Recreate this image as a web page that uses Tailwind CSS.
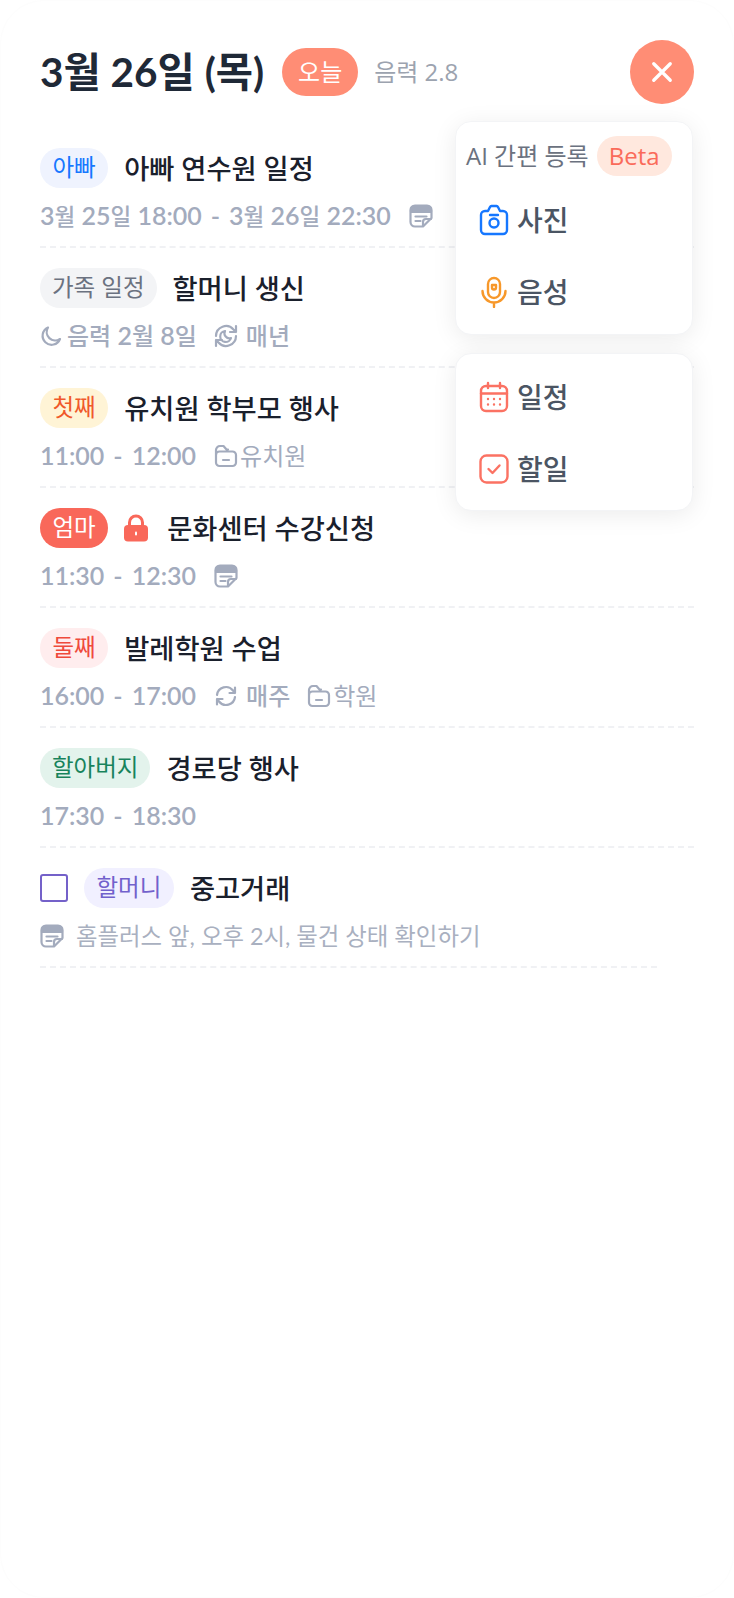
<!DOCTYPE html>
<html lang="ko">
<head>
  <meta charset="UTF-8" />
  <meta name="viewport" content="width=device-width, initial-scale=1" />
  <title>일정</title>
  <script src="https://cdn.jsdelivr.net/npm/@tailwindcss/browser@4"></script>
</head>
<body class="bg-white">
  <div class="relative w-[734px] h-[1598px] overflow-hidden rounded-[44px] border border-[#fdfdfd] font-['Lato','Noto_Sans_CJK_KR',sans-serif]">
    <!-- header -->
    <header class="flex items-center h-[127px] pl-[39px] pr-[39px] pt-[31px] pb-[16px]">
      <h1 class="text-[40.500px] font-bold text-[#1f2937] leading-none">3월 26일 (목)</h1>
      <span class="ml-[18px] flex items-center justify-center w-[76px] h-[48px] rounded-full bg-[#ff8d75] text-white text-[24px]">오늘</span>
      <span class="ml-[16px] text-[24px] text-[#9ca3af] font-['Open_Sans','Noto_Sans_CJK_KR',sans-serif]">음력 2.8</span>
      <button class="ml-auto w-[64px] h-[64px] rounded-full bg-[#ff8d75] flex items-center justify-center">
        <svg width="22" height="22" viewBox="0 0 24 24" fill="none" stroke="white" stroke-width="3.600" stroke-linecap="round"><path d="M3 3l18 18M21 3L3 21"/></svg>
      </button>
    </header>

    <!-- list -->
    <ul class="px-[39px]">
      <li class="h-[120px] pt-[20px] border-b-2 border-dashed border-[#f0f1f4]">
        <div class="flex items-center h-[40px]">
          <span class="flex items-center h-[40px] px-[12.500px] rounded-full bg-[#eff3fe] text-[#1677ff] text-[23.500px]">아빠</span>
          <span class="ml-[16px] pt-[2px] text-[27.300px] font-medium text-[#1a202c]">아빠 연수원 일정</span>
        </div>
        <div class="flex items-center h-[32px] mt-[12px] text-[#a3abbd] text-[25px] font-semibold">
          <span>3<span class="text-[22.500px] font-medium">월</span> 25<span class="text-[22.500px] font-medium">일</span> 18:00</span><span class="ml-[9px]">-</span><span class="ml-[9px]">3<span class="text-[22.500px] font-medium">월</span> 26<span class="text-[22.500px] font-medium">일</span> 22:30</span>
          <svg class="ml-[18px]" width="24" height="24" viewBox="0 0 24 24" fill="none" stroke="#a3abbd" stroke-width="2.200" stroke-linecap="round" stroke-linejoin="round"><path d="M22.500 14V6a4.500 4.500 0 0 0-4.500-4.500H6A4.500 4.500 0 0 0 1.500 6v12A4.500 4.500 0 0 0 6 22.500h8z"/><path d="M2 6.500A4.500 4.500 0 0 1 6 2h12a4.500 4.500 0 0 1 4 4.500V8H2z" fill="#a3abbd"/><path d="M6.500 12.500h11M6.500 17h5M14 22v-4a3 3 0 0 1 3-3h5"/></svg>
        </div>
      </li>
      <li class="h-[120px] pt-[20px] border-b-2 border-dashed border-[#f0f1f4]">
        <div class="flex items-center h-[40px]">
          <span class="flex items-center h-[40px] px-[12px] rounded-full bg-[#f3f4f6] text-[#6b7280] text-[23.500px]">가족 일정</span>
          <span class="ml-[16px] pt-[2px] text-[27.300px] font-medium text-[#1a202c]">할머니 생신</span>
        </div>
        <div class="flex items-center h-[32px] mt-[12px] text-[#a3abbd] text-[25px] font-semibold">
          <svg class="-ml-px" width="24" height="24" viewBox="0 0 24 24" fill="none" stroke="#a3abbd" stroke-width="2.200" stroke-linecap="round" stroke-linejoin="round"><path d="M9 3.500a9 9 0 1 0 12 11.500 8.500 8.500 0 0 1-12-11.500z"/></svg>
          <span class="ml-[4px]"><span class="text-[24px] font-medium">음력</span> 2<span class="text-[24px] font-medium">월</span> 8<span class="text-[24px] font-medium">일</span></span>
          <svg class="ml-[16px]" width="26" height="26" viewBox="0 0 26 26" fill="none" stroke="#a3abbd" stroke-width="2.200" stroke-linecap="round" stroke-linejoin="round"><path d="M3 13A10 10 0 0 1 20.500 6.500L23 9M23 3v6h-6M23 13A10 10 0 0 1 5.500 19.500L3 17M3 23v-6h6"/><path d="M12 8a5.500 5.500 0 1 0 6 7 5 5 0 0 1-6-7z"/></svg>
          <span class="ml-[7px] text-[24px] font-medium">매년</span>
        </div>
      </li>
      <li class="h-[120px] pt-[20px] border-b-2 border-dashed border-[#f0f1f4]">
        <div class="flex items-center h-[40px]">
          <span class="flex items-center h-[40px] px-[12.500px] rounded-full bg-[#fff4d6] text-[#f0592b] text-[23.500px]">첫째</span>
          <span class="ml-[16px] pt-[2px] text-[27.300px] font-medium text-[#1a202c]">유치원 학부모 행사</span>
        </div>
        <div class="flex items-center h-[32px] mt-[12px] text-[#a3abbd] text-[25px] font-semibold">
          <span>11:00</span><span class="ml-[9px]">-</span><span class="ml-[9px]">12:00</span>
          <svg class="ml-[18px]" width="24" height="24" viewBox="0 0 24 24" fill="none" stroke="#a3abbd" stroke-width="2.200" stroke-linecap="round" stroke-linejoin="round"><path d="M2 11V6a4 4 0 0 1 4-4h3.500l3 3.500H14M2 11a3.500 3.500 0 0 1 3.500-3.500h13A3.500 3.500 0 0 1 22 11v7.500a3.500 3.500 0 0 1-3.500 3.500h-13A3.500 3.500 0 0 1 2 18.500z"/><path d="M9 16h6"/></svg>
          <span class="ml-[2px] text-[24px] font-normal">유치원</span>
        </div>
      </li>
      <li class="h-[120px] pt-[20px] border-b-2 border-dashed border-[#f0f1f4]">
        <div class="flex items-center h-[40px]">
          <span class="flex items-center h-[40px] px-[12.500px] rounded-full bg-[#f9685a] text-white text-[23.500px]">엄마</span>
          <svg class="ml-[15px]" width="26" height="28" viewBox="0 0 26 28" fill="none"><path d="M6.500 13V8.500a6.500 6.500 0 0 1 13 0V13" stroke="#f9685a" stroke-width="3"/><rect x="1" y="11" width="24" height="16.500" rx="4" fill="#f9685a"/><rect x="12" y="17.500" width="2" height="4" rx="1" fill="white"/></svg>
          <span class="ml-[18px] pt-[2px] text-[27.300px] font-medium text-[#1a202c]">문화센터 수강신청</span>
        </div>
        <div class="flex items-center h-[32px] mt-[12px] text-[#a3abbd] text-[25px] font-semibold">
          <span>11:30</span><span class="ml-[9px]">-</span><span class="ml-[9px]">12:30</span>
          <svg class="ml-[18px]" width="24" height="24" viewBox="0 0 24 24" fill="none" stroke="#a3abbd" stroke-width="2.200" stroke-linecap="round" stroke-linejoin="round"><path d="M22.500 14V6a4.500 4.500 0 0 0-4.500-4.500H6A4.500 4.500 0 0 0 1.500 6v12A4.500 4.500 0 0 0 6 22.500h8z"/><path d="M2 6.500A4.500 4.500 0 0 1 6 2h12a4.500 4.500 0 0 1 4 4.500V8H2z" fill="#a3abbd"/><path d="M6.500 12.500h11M6.500 17h5M14 22v-4a3 3 0 0 1 3-3h5"/></svg>
        </div>
      </li>
      <li class="h-[120px] pt-[20px] border-b-2 border-dashed border-[#f0f1f4]">
        <div class="flex items-center h-[40px]">
          <span class="flex items-center h-[40px] px-[12.500px] rounded-full bg-[#ffedee] text-[#ef4a3c] text-[23.500px]">둘째</span>
          <span class="ml-[16px] pt-[2px] text-[27.300px] font-medium text-[#1a202c]">발레학원 수업</span>
        </div>
        <div class="flex items-center h-[32px] mt-[12px] text-[#a3abbd] text-[25px] font-semibold">
          <span>16:00</span><span class="ml-[9px]">-</span><span class="ml-[9px]">17:00</span>
          <svg class="ml-[18px]" width="24" height="24" viewBox="0 0 24 24" fill="none" stroke="#a3abbd" stroke-width="2.200" stroke-linecap="round" stroke-linejoin="round"><path d="M3 11A9 9 0 0 1 19 6.500L21 9M21 3.500V9h-5.500M21 13A9 9 0 0 1 5 17.500L3 15M3 20.500V15h5.500"/></svg>
          <span class="ml-[8px] text-[24px] font-medium">매주</span>
          <svg class="ml-[17px]" width="24" height="24" viewBox="0 0 24 24" fill="none" stroke="#a3abbd" stroke-width="2.200" stroke-linecap="round" stroke-linejoin="round"><path d="M2 11V6a4 4 0 0 1 4-4h3.500l3 3.500H14M2 11a3.500 3.500 0 0 1 3.500-3.500h13A3.500 3.500 0 0 1 22 11v7.500a3.500 3.500 0 0 1-3.500 3.500h-13A3.500 3.500 0 0 1 2 18.500z"/><path d="M9 16h6"/></svg>
          <span class="ml-[2px] text-[24px] font-normal">학원</span>
        </div>
      </li>
      <li class="h-[120px] pt-[20px] border-b-2 border-dashed border-[#f0f1f4]">
        <div class="flex items-center h-[40px]">
          <span class="flex items-center h-[40px] px-[12px] rounded-full bg-[#e3f3ec] text-[#18835c] text-[23.500px]">할아버지</span>
          <span class="ml-[16px] pt-[2px] text-[27.300px] font-medium text-[#1a202c]">경로당 행사</span>
        </div>
        <div class="flex items-center h-[32px] mt-[12px] text-[#a3abbd] text-[25px] font-semibold">
          <span>17:30</span><span class="ml-[9px]">-</span><span class="ml-[9px]">18:30</span>
        </div>
      </li>
      <li class="h-[120px] w-[617px] pt-[20px] border-b-2 border-dashed border-[#f0f1f4]">
        <div class="flex items-center h-[40px]">
          <span class="w-[28px] h-[28px] rounded-[3px] border-2 border-[#7461c9]"></span>
          <span class="ml-[16px] flex items-center h-[40px] px-[12.500px] rounded-full bg-[#f1f0ff] text-[#7261cc] text-[23.500px]">할머니</span>
          <span class="ml-[16px] pt-[2px] text-[27.300px] font-medium text-[#1a202c]">중고거래</span>
        </div>
        <div class="flex items-center h-[32px] mt-[12px] text-[#a9b0c0] text-[23.400px]">
          <svg width="24" height="24" viewBox="0 0 24 24" fill="none" stroke="#a3abbd" stroke-width="2.200" stroke-linecap="round" stroke-linejoin="round"><path d="M22.500 14V6a4.500 4.500 0 0 0-4.500-4.500H6A4.500 4.500 0 0 0 1.500 6v12A4.500 4.500 0 0 0 6 22.500h8z"/><path d="M2 6.500A4.500 4.500 0 0 1 6 2h12a4.500 4.500 0 0 1 4 4.500V8H2z" fill="#a3abbd"/><path d="M6.500 12.500h11M6.500 17h5M14 22v-4a3 3 0 0 1 3-3h5"/></svg>
          <span class="ml-[12px] pt-[1px]">홈플러스 앞, 오후 2시, 물건 상태 확인하기</span>
        </div>
      </li>
    </ul>

    <!-- add menu -->
    <div class="absolute left-[454px] top-[120px] w-[238px] flex flex-col gap-[18px]">
      <div class="h-[214px] rounded-[16px] bg-white border border-[#f3f4f6] shadow-[0_4px_24px_rgba(0,0,0,0.08)]">
        <div class="flex items-center h-[40px] mt-[14px] mb-[8px] pl-[10px] font-['Open_Sans','Noto_Sans_CJK_KR',sans-serif]">
          <span class="text-[24px] text-[#6b7280] whitespace-nowrap">AI 간편 등록</span>
          <span class="ml-[8px] flex items-center h-[40px] px-[12px] rounded-full bg-[#ffe8de] text-[#fa6b5a] text-[24px]">Beta</span>
        </div>
        <div class="flex items-center h-[72px] pl-[23px] text-[28px] font-medium text-[#4b5563]">
          <svg width="30" height="32" viewBox="0 0 30 32" fill="none" stroke="#1677ff" stroke-width="2.400" stroke-linecap="round" stroke-linejoin="round"><path d="M9 7l2-4a2 2 0 0 1 1.500-1h5A2 2 0 0 1 19 3l2 4h3a4 4 0 0 1 4 4v15a4 4 0 0 1-4 4H6a4 4 0 0 1-4-4V11a4 4 0 0 1 4-4z"/><circle cx="15" cy="19" r="4.500"/><path d="M11 11h8"/></svg>
          <span class="ml-[8px]">사진</span>
        </div>
        <div class="flex items-center h-[72px] pl-[23px] text-[28px] font-medium text-[#4b5563]">
          <svg width="30" height="32" viewBox="0 0 30 32" fill="none" stroke="#f7982a" stroke-width="2.400" stroke-linecap="round" stroke-linejoin="round"><rect x="9" y="2" width="12" height="20" rx="6"/><path d="M3.500 15a11.500 11.500 0 0 0 23 0M15 26.500V31M13 9h4v2.500a2 2 0 0 1-4 0z"/></svg>
          <span class="ml-[8px]">음성</span>
        </div>
      </div>
      <div class="h-[158px] py-[7px] rounded-[16px] bg-white border border-[#f3f4f6] shadow-[0_4px_24px_rgba(0,0,0,0.08)]">
        <div class="flex items-center h-[72px] pl-[23px] text-[28px] font-medium text-[#4b5563]">
          <svg width="30" height="32" viewBox="0 0 30 32" fill="none" stroke="#fb7263" stroke-width="2.400" stroke-linecap="round" stroke-linejoin="round"><rect x="2" y="5" width="26" height="25" rx="5"/><path d="M2 12.500h26M9 2v5M21 2v5"/><path d="M9 18h.01M15 18h.01M21 18h.01M9 23.500h.01M15 23.500h.01M21 23.500h.01"/></svg>
          <span class="ml-[8px]">일정</span>
        </div>
        <div class="flex items-center h-[72px] pl-[23px] text-[28px] font-medium text-[#4b5563]">
          <svg width="30" height="32" viewBox="0 0 30 32" fill="none" stroke="#fb7263" stroke-width="2.400" stroke-linecap="round" stroke-linejoin="round"><rect x="1.500" y="2.500" width="27" height="27" rx="6"/><path d="M9.500 16l4 4 7-7.500"/></svg>
          <span class="ml-[8px]">할일</span>
        </div>
      </div>
    </div>
  </div>
</body>
</html>
